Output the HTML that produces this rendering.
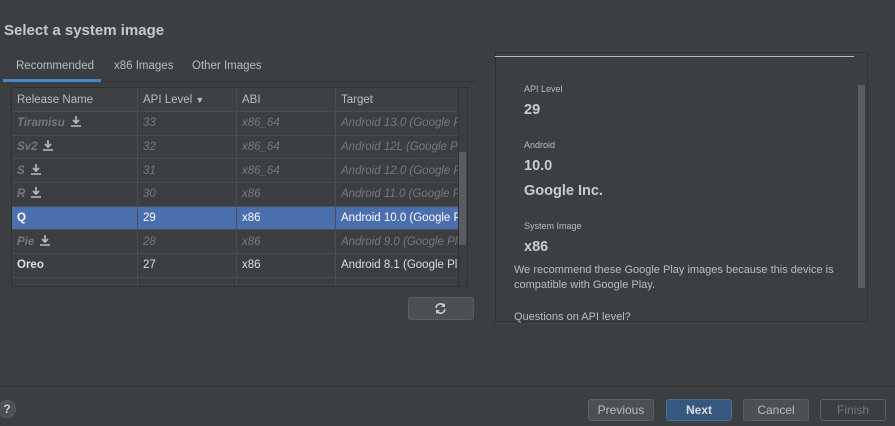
<!DOCTYPE html>
<html><head><style>
*{margin:0;padding:0;box-sizing:border-box}
body{width:895px;height:426px;background:#3c3f41;font-family:"Liberation Sans",sans-serif;color:#bbbbbb;position:relative;overflow:hidden;font-size:12px}
.a{position:absolute}
.title{left:4px;top:22px;font-size:15px;font-weight:bold;color:#c8c8c8}
.tab{top:60px;font-size:11.5px;color:#bbb}
.wrap{position:absolute;left:12px;top:88px;width:446px;height:198px;overflow:hidden}
table{border-collapse:collapse;width:447px;table-layout:fixed;margin-left:-1px;margin-top:-1px}
td{border:1px solid #4b4e50;padding:0 5px;font-size:11.5px;white-space:nowrap;overflow:hidden;line-height:14px}
th{border:1px solid #4b4e50;padding:0 5px;font-weight:normal;text-align:left;font-size:11.5px;color:#bbb;line-height:14px}
tr{height:23.7px}
tr.h{height:24px}
tr.d td{color:#787878;font-style:italic}
tr.d td:first-child{font-weight:bold}
tr.s td{background:#4b6eaf;color:#fff}
tr.b td{color:#ddd}
tr.b td:first-child,tr.s td:first-child{font-weight:bold}
.dl{display:inline-block;width:10px;height:11px;position:relative;margin-left:6px;vertical-align:-1px}
.btn{top:399px;height:22px;width:66px;border:1px solid #5e6060;background:#4c5052;border-radius:3px;color:#bbb;text-align:center;line-height:20px;font-size:12px}
.lbl{font-size:9px;color:#bbb;left:524px}
.big{font-size:14.5px;font-weight:bold;color:#ccc;left:524px}
</style></head><body>
<div class="a title">Select a system image</div>
<div class="a tab" style="left:16px">Recommended</div>
<div class="a tab" style="left:114px">x86 Images</div>
<div class="a tab" style="left:192px">Other Images</div>
<div class="a" style="left:3px;top:81px;width:473px;height:1px;background:#323232"></div>
<div class="a" style="left:3px;top:79px;width:98px;height:3px;background:#4a88c7"></div>
<div class="a" style="left:11px;top:87px;width:457px;height:200px;border:1px solid #2f3133;background:#3c3f41"></div>
<svg width="0" height="0" style="position:absolute"><defs><g id="dl"><path d="M5 0v7M2 4l3 3 3-3M0 10h10" stroke="#bbb" stroke-width="1.6" fill="none"/></g></defs></svg>
<div class="wrap">
<table>
<colgroup><col style="width:126px"><col style="width:99px"><col style="width:99px"><col style="width:123px"></colgroup>
<tr class="h" style="background:#3e4143"><th>Release Name</th><th>API Level <span style="font-size:9px">▼</span></th><th>ABI</th><th>Target</th></tr>
<tr class="d"><td>Tiramisu<svg class="dl" viewBox="0 0 10 11"><use href="#dl"/></svg></td><td>33</td><td>x86_64</td><td>Android 13.0 (Google Play</td></tr>
<tr class="d"><td>Sv2<svg class="dl" viewBox="0 0 10 11"><use href="#dl"/></svg></td><td>32</td><td>x86_64</td><td>Android 12L (Google Play</td></tr>
<tr class="d"><td>S<svg class="dl" viewBox="0 0 10 11"><use href="#dl"/></svg></td><td>31</td><td>x86_64</td><td>Android 12.0 (Google Play</td></tr>
<tr class="d"><td>R<svg class="dl" viewBox="0 0 10 11"><use href="#dl"/></svg></td><td>30</td><td>x86</td><td>Android 11.0 (Google Play</td></tr>
<tr class="s"><td>Q</td><td>29</td><td>x86</td><td>Android 10.0 (Google Play</td></tr>
<tr class="d"><td>Pie<svg class="dl" viewBox="0 0 10 11"><use href="#dl"/></svg></td><td>28</td><td>x86</td><td>Android 9.0 (Google Play</td></tr>
<tr class="b"><td>Oreo</td><td>27</td><td>x86</td><td>Android 8.1 (Google Play</td></tr>
<tr><td></td><td></td><td></td><td></td></tr>
</table>
</div>
<div class="a" style="left:458px;top:88px;width:9px;height:198px;background:#3c3f41;border-left:1px solid #2f3133"></div>
<div class="a" style="left:459px;top:152px;width:7px;height:93px;background:#5a5d5f"></div>
<div class="a" style="left:408px;top:297px;width:66px;height:23px;border:1px solid #5e6060;background:#4c5052;border-radius:3px"></div>
<svg class="a" style="left:434px;top:302px" width="13" height="13" viewBox="0 0 13 13"><path d="M2 6a4.5 4.5 0 0 1 8-2.5M11 7a4.5 4.5 0 0 1-8 2.5" stroke="#ccc" stroke-width="1.6" fill="none"/><path d="M11 1v4H7zM2 12V8h4z" fill="#ccc"/></svg>
<div class="a" style="left:495px;top:52px;width:373px;height:270px;border:1px solid #2f3133"></div>
<div class="a" style="left:495px;top:56px;width:359px;height:1px;background:#bbb"></div>
<div class="a" style="left:858px;top:85px;width:7px;height:203px;background:#5a5d5f"></div>
<div class="a lbl" style="top:84px">API Level</div>
<div class="a big" style="top:102px">29</div>
<div class="a lbl" style="top:140px">Android</div>
<div class="a big" style="top:158px">10.0</div>
<div class="a big" style="top:183px">Google Inc.</div>
<div class="a lbl" style="top:221px">System Image</div>
<div class="a big" style="top:239px">x86</div>
<div class="a" style="left:514px;top:263px;font-size:11px;line-height:15px;color:#bbb">We recommend these Google Play images because this device is<br>compatible with Google Play.</div>
<div class="a" style="left:514px;top:311px;font-size:11px;color:#bbb">Questions on API level?</div>
<div class="a" style="left:0;top:386px;width:895px;height:1px;background:#2e3032"></div>
<div class="a" style="left:-2px;top:400px;width:18px;height:18px;border-radius:50%;background:#4c5052;border:1px solid #5a5d5f;color:#ccc;font-weight:bold;font-size:12px;text-align:center;line-height:16px">?</div>
<div class="a btn" style="left:588px">Previous</div>
<div class="a btn" style="left:666px;background:#365880;border-color:#4c708c;color:#ddd;font-weight:bold">Next</div>
<div class="a btn" style="left:743px">Cancel</div>
<div class="a btn" style="left:820px;background:#3c3f41;color:#777">Finish</div>
</body></html>
